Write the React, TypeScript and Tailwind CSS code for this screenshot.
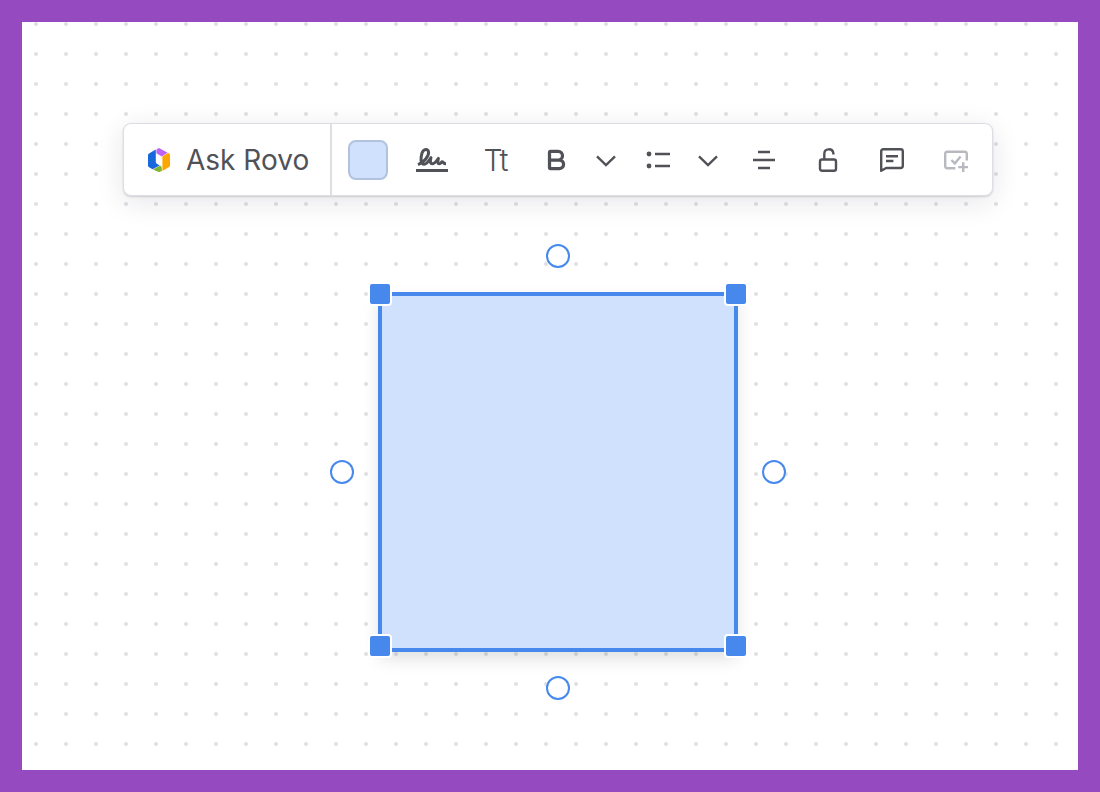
import type { ReactNode } from "react";
import { Bold } from "lucide-react";

function RovoLogo() {
  return (
    <svg width="22" height="24" viewBox="0 0 22 24" aria-hidden="true">
      <path d="M0 7.2Q0 6 1 5.4L7.8 1.5V14Q7.8 15.2 8.8 15.8L11.6 17.4L4.6 21.3L1 19.2Q0 18.6 0 17.5Z" fill="#1868db" />
      <path d="M8.4 2.6Q8.4 1.4 9.4 0.8L10 0.4Q11 -0.2 12 0.4L19.6 4.8L13.8 8.4L8.4 5.3Z" fill="#bf63f3" />
      <path d="M20 5L21 5.6Q22 6.2 22 7.3V17.4Q22 18.5 21 19.1L14.4 22.9V8.6Z" fill="#fca700" />
      <path d="M5 21.4L12 17.5Q13.8 18.2 13.8 20V23L12 23.8Q11 24.2 10 23.8Z" fill="#82b536" />
    </svg>
  );
}

function SignatureIcon() {
  return (
    <svg width="32" height="26" viewBox="0 0 32 26" fill="none" stroke="currentColor" strokeWidth="3" aria-hidden="true">
      <path
        d="M2 17.6C7 15.8 12.8 10.2 12.6 5.4C12.4 1.4 7.4 1.2 5.9 6.4C4.6 11 4.2 17.2 8.2 17.2C11.2 17.2 13 13.4 15 10.6C14.2 13.4 13.8 16.8 16.2 16.8C18.8 16.8 20.6 13.8 22.4 11.4C21.8 13.8 21.2 16.8 23.4 16.8C25 16.8 25.2 14.8 26.2 14.8C27.4 14.8 27.2 16.8 30 16.8"
        strokeLinejoin="round"
      />
      <path d="M0 23.5H32" />
    </svg>
  );
}

function LineIcon({ children }: { children: ReactNode }) {
  return (
    <svg width="24" height="24" viewBox="0 0 24 24" fill="none" stroke="currentColor" strokeWidth="2.4" aria-hidden="true">
      {children}
    </svg>
  );
}

function ChevronIcon() {
  return (
    <LineIcon>
      <path d="M3 8.3L12 17L21 8.3" />
    </LineIcon>
  );
}

function ToolButton({
  label,
  width = "w-16",
  disabled = false,
  children,
}: {
  label: string;
  width?: string;
  disabled?: boolean;
  children: ReactNode;
}) {
  return (
    <button
      type="button"
      aria-label={label}
      disabled={disabled}
      className={`flex h-full shrink-0 items-center justify-center disabled:text-[#b7b9be] ${width}`}
    >
      {children}
    </button>
  );
}

function Toolbar() {
  return (
    <div
      role="toolbar"
      aria-label="Shape formatting"
      className="flex h-[73px] items-stretch rounded-lg border border-[#dcdee3] bg-white text-[#505258] shadow-[0_1px_2px_rgba(30,31,33,0.16),0_6px_28px_rgba(30,31,60,0.11)]"
    >
      <button type="button" className="flex w-52 items-center gap-4 border-r-2 border-[#dddee1] pl-6 text-[28px] leading-8">
        <RovoLogo />
        Ask Rovo
      </button>

      <div className="flex items-center px-1">
        <ToolButton label="Fill color">
          <span className="size-10 rounded-lg border-2 border-[#b2c1df] bg-[#cfe1fd]" />
        </ToolButton>
        <ToolButton label="Border style">
          <SignatureIcon />
        </ToolButton>
        <ToolButton label="Text size">
          <span className="text-[30px] leading-8 font-light">Tt</span>
        </ToolButton>

        <ToolButton label="Bold" width="w-14">
          <Bold size={26} strokeWidth={3} />
        </ToolButton>
        <ToolButton label="More text styles" width="w-11">
          <ChevronIcon />
        </ToolButton>

        <ToolButton label="Bulleted list" width="w-15">
          <LineIcon>
            <path d="M9 6H24M9 18H24" />
            <circle cx="3" cy="6" r="2.4" fill="currentColor" stroke="none" />
            <circle cx="3" cy="18" r="2.4" fill="currentColor" stroke="none" />
          </LineIcon>
        </ToolButton>
        <ToolButton label="More list styles" width="w-10">
          <ChevronIcon />
        </ToolButton>

        <div className="flex h-full pl-1">
          <ToolButton label="Vertical align">
            <LineIcon>
              <path d="M1 12H23M6 4H18M6 20H18" />
            </LineIcon>
          </ToolButton>
          <ToolButton label="Lock">
            <LineIcon>
              <rect x="4" y="11.5" width="16" height="11.3" rx="2" />
              <path d="M8.3 11.5V5.8C8.3 0 16.6 -0.2 17.4 5.4V6.4" />
            </LineIcon>
          </ToolButton>
          <ToolButton label="Comment">
            <LineIcon>
              <path d="M1.2 22.8V3.4Q1.2 1.2 3.4 1.2H20.6Q22.8 1.2 22.8 3.4V17.8Q22.8 20 20.6 20H6.2Z" strokeLinejoin="round" />
              <path d="M6 8.2H18M6 13H13.4" />
            </LineIcon>
          </ToolButton>
          <ToolButton label="Create task" disabled>
            <LineIcon>
              <path d="M11.4 20.3H3.4Q1.2 20.3 1.2 18V6Q1.2 3.7 3.4 3.7H20.6Q22.8 3.7 22.8 6V12.4" />
              <path d="M7.4 12L10.8 15.4L16.6 8.4" />
              <path d="M19.2 14.2V24M14.3 19.1H24" />
            </LineIcon>
          </ToolButton>
        </div>
      </div>
    </div>
  );
}

const handles = [
  { label: "Resize top left", position: "-top-2.5 -left-2.5" },
  { label: "Resize top right", position: "-top-2.5 -right-2.5" },
  { label: "Resize bottom left", position: "-bottom-1.5 -left-2.5" },
  { label: "Resize bottom right", position: "-bottom-1.5 -right-2.5" },
];

const connectors = [
  { label: "Connect from top", position: "-top-12 left-1/2 -translate-x-1/2" },
  { label: "Connect from right", position: "top-1/2 -right-12 -translate-y-1/2" },
  { label: "Connect from bottom", position: "-bottom-12 left-1/2 -translate-x-1/2" },
  { label: "Connect from left", position: "top-1/2 -left-12 -translate-y-1/2" },
];

function SelectedShape() {
  return (
    <div className="relative size-90">
      <div className="size-full border-4 border-[#4688ec] bg-[#cfe1fd] shadow-[0_8px_16px_-2px_rgba(30,31,33,0.15)]" />
      {handles.map((handle) => (
        <button
          key={handle.label}
          type="button"
          aria-label={handle.label}
          className={`absolute size-6 rounded-[4px] border-2 border-white bg-[#4688ec] ${handle.position}`}
        />
      ))}
      {connectors.map((connector) => (
        <button
          key={connector.label}
          type="button"
          aria-label={connector.label}
          className={`absolute size-6 rounded-full border-2 border-[#4688ec] bg-white ${connector.position}`}
        />
      ))}
    </div>
  );
}

export default function App() {
  return (
    <main className="flex min-h-screen bg-[#964ac0] p-[22px] font-['Inter','Liberation_Sans',sans-serif]">
      <div className="flex grow flex-col items-center gap-24 bg-white bg-[radial-gradient(circle,#e0e1e5_1.5px,transparent_2.4px)] bg-[size:30px_30px] bg-[position:-1px_-13px] pt-[101px] pb-24 pl-4">
        <Toolbar />
        <SelectedShape />
      </div>
    </main>
  );
}
